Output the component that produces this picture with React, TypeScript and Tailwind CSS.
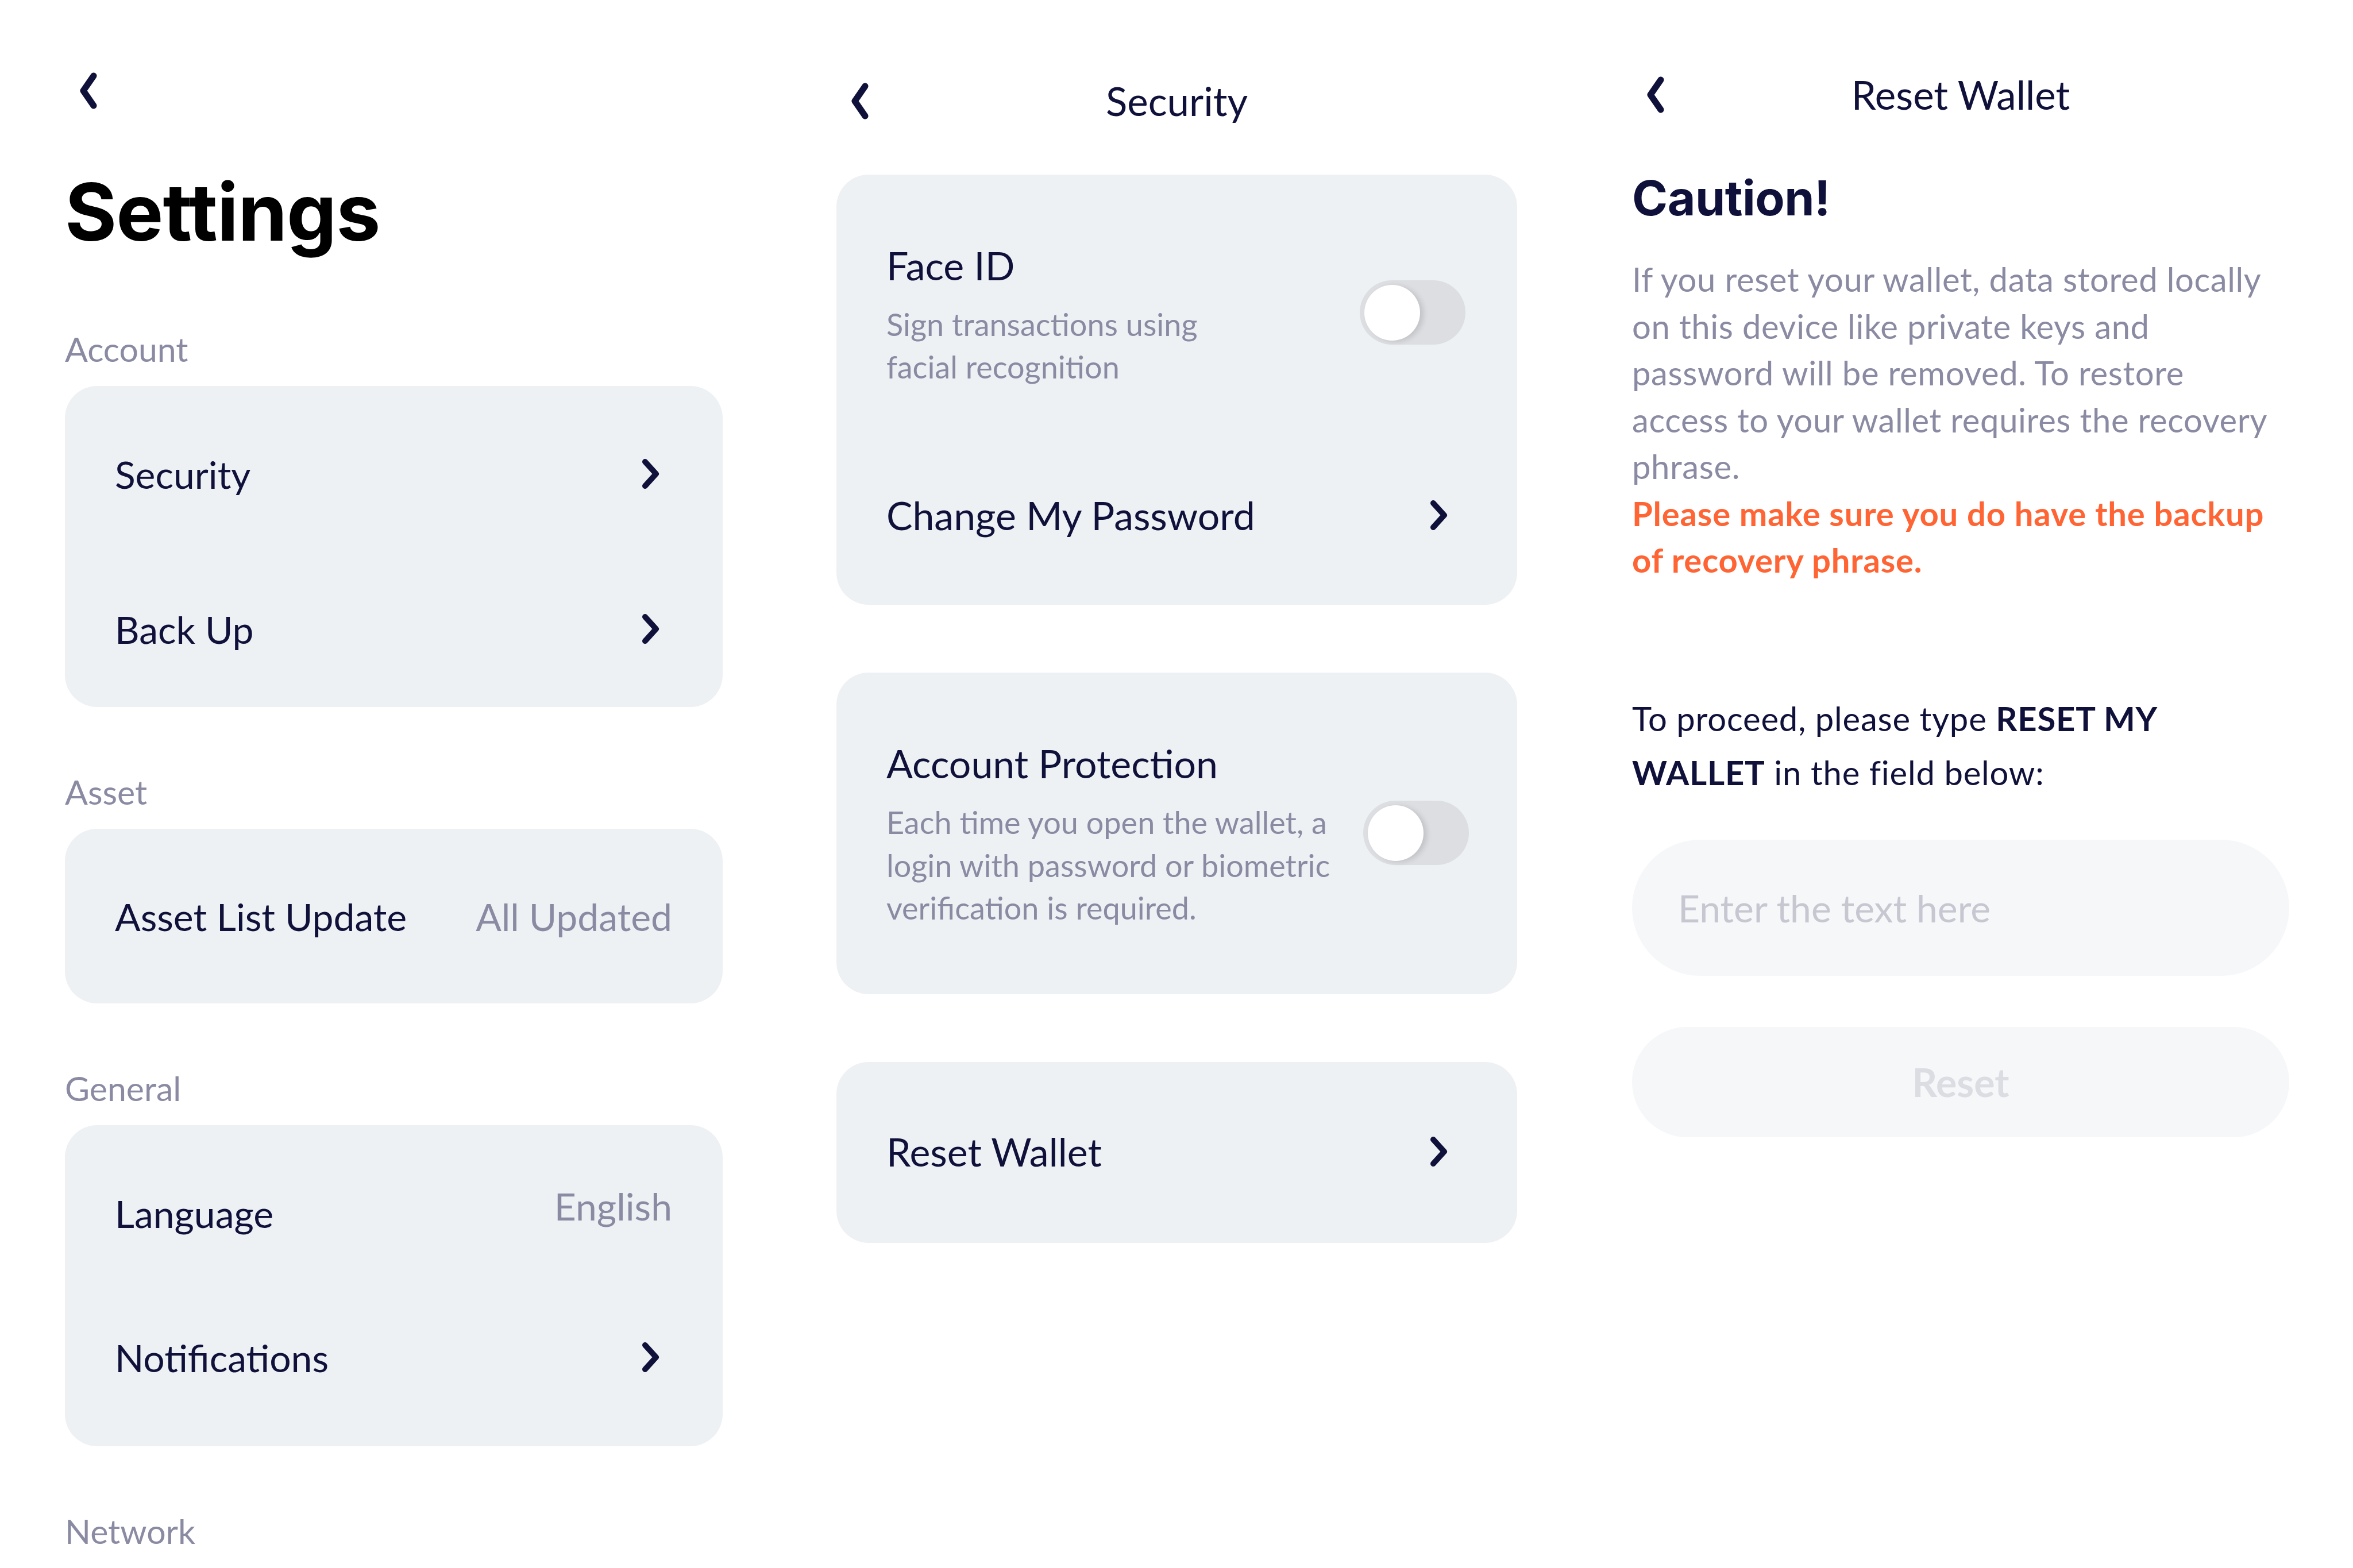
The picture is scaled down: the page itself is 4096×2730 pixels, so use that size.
import React from 'react';

const navy = 'text-[#10113a]';

function BackChevron() {
  return (
    <svg width="44" height="64" viewBox="0 0 44 64" fill="none" className="shrink-0">
      <path d="M30 6 L12 32 L30 58" stroke="#10113a" strokeWidth="11" strokeLinecap="round" strokeLinejoin="round" />
    </svg>
  );
}

function RowChevron() {
  return (
    <svg width="34" height="52" viewBox="0 0 34 52" fill="none" className="shrink-0">
      <path d="M7 5 L26 26 L7 47" stroke="#10113a" strokeWidth="10" strokeLinecap="round" strokeLinejoin="round" />
    </svg>
  );
}

function Toggle() {
  return (
    <div className="w-[184px] h-[112px] rounded-full bg-[#dcdee2] flex items-center pl-[8px] shrink-0">
      <div className="w-[97px] h-[97px] rounded-full bg-white shadow-[6px_2px_10px_rgba(0,0,0,0.12)]" />
    </div>
  );
}

function SectionLabel({ text, first }: { text: string; first?: boolean }) {
  return (
    <div className={`${first ? 'mt-[135px]' : 'mt-[113px]'} mb-[29px] h-[70px] leading-[70px] text-[59px] text-[#8a8ba3]`}>
      {text}
    </div>
  );
}

function Row({ label, children, h }: { label: string; children?: React.ReactNode; h: string }) {
  return (
    <div className={`${h} flex items-center justify-between pl-[87px] pr-[88px]`}>
      <span className={`text-[66px] ${navy}`}>{label}</span>
      {children}
    </div>
  );
}

function SettingsColumn() {
  return (
    <div className="w-[1145px] shrink-0 flex flex-col">
      <div className="pt-[126px] pl-[20px] h-[190px]">
        <BackChevron />
      </div>
      <h1 className="mt-[110px] text-[138px] leading-none font-bold text-black font-['Inter',sans-serif] tracking-[-1px]">
        Settings
      </h1>

      <SectionLabel text="Account" first />
      <div className="h-[560px] rounded-[56px] bg-[#eef1f4] pt-[18px]">
        <Row label="Security" h="h-[270px]">
          <span className="mr-[20px]"><RowChevron /></span>
        </Row>
        <Row label="Back Up" h="h-[270px]">
          <span className="mr-[20px]"><RowChevron /></span>
        </Row>
      </div>

      <SectionLabel text="Asset" />
      <div className="h-[305px] rounded-[56px] bg-[#eef1f4] flex flex-col justify-center">
        <Row label="Asset List Update" h="h-[300px]">
          <span className="text-[66px] text-[#8a8ba3]">All Updated</span>
        </Row>
      </div>

      <SectionLabel text="General" />
      <div className="h-[560px] rounded-[56px] bg-[#eef1f4] pt-[28px]">
        <Row label="Language" h="h-[250px]">
          <span className="text-[66px] text-[#8a8ba3] mb-[26px]">English</span>
        </Row>
        <Row label="Notifications" h="h-[252px]">
          <span className="mr-[20px]"><RowChevron /></span>
        </Row>
      </div>

      <SectionLabel text="Network" />
    </div>
  );
}

function Header({ title, top }: { title: string; top: string }) {
  return (
    <div className={`${top} flex items-center h-[64px]`}>
      <div className="w-[90px] pl-[20px]">
        <BackChevron />
      </div>
      <div className={`flex-1 text-center text-[69px] leading-[64px] ${navy}`}>{title}</div>
      <div className="w-[90px]" />
    </div>
  );
}

function SecurityColumn() {
  return (
    <div className="w-[1185px] shrink-0 ml-[198px] flex flex-col">
      <Header title="Security" top="mt-[144px]" />

      <div className="mt-[96px] h-[749px] rounded-[56px] bg-[#eef1f4] flex flex-col">
        <div className="pt-[118px] pl-[87px] pr-[90px] flex items-start justify-between">
          <div>
            <div className={`text-[68px] leading-[80px] ${navy}`}>Face ID</div>
            <div className="mt-[26px] text-[54px] leading-[74px] text-[#8a8ba3]">
              Sign transactions using
              <br />
              facial recognition
            </div>
          </div>
          <div className="mt-[66px]">
            <Toggle />
          </div>
        </div>
        <div className="mt-auto mb-[6px] h-[300px] flex items-center justify-between pl-[87px] pr-[119px]">
          <span className={`text-[68px] ${navy}`}>Change My Password</span>
          <RowChevron />
        </div>
      </div>

      <div className="mt-[118px] rounded-[56px] bg-[#eef1f4] pt-[118px] pb-[112px] pl-[87px] pr-[84px]">
        <div className={`text-[68px] leading-[80px] ${navy}`}>Account Protection</div>
        <div className="mt-[26px] flex items-start justify-between">
          <div className="text-[54px] leading-[74.5px] text-[#8a8ba3]">
            Each time you open the wallet, a
            <br />
            login with password or biometric
            <br />
            verification is required.
          </div>
          <div className="-mt-[1px]">
            <Toggle />
          </div>
        </div>
      </div>

      <div className="mt-[118px] h-[315px] rounded-[56px] bg-[#eef1f4] flex items-center justify-between pl-[87px] pr-[119px] pb-[2px]">
        <span className={`text-[68px] ${navy}`}>Reset Wallet</span>
        <RowChevron />
      </div>
    </div>
  );
}

function ResetColumn() {
  return (
    <div className="w-[1144px] shrink-0 ml-[200px] flex flex-col">
      <Header title="Reset Wallet" top="mt-[133px]" />

      <h2 className={`mt-[98px] text-[84px] leading-[100px] font-bold font-['Inter',sans-serif] tracking-[-0.5px] ${navy}`}>
        Caution!
      </h2>

      <p className="mt-[50px] text-[58px] leading-[81.5px] tracking-[0.6px] text-[#8a8ba3]">
        If you reset your wallet, data stored locally
        <br />
        on this device like private keys and
        <br />
        password will be removed. To restore
        <br />
        access to your wallet requires the recovery
        <br />
        phrase.
      </p>
      <p className="text-[58px] leading-[81.5px] tracking-[0.8px] font-bold text-[#ff6534]">
        Please make sure you do have the backup
        <br />
        of recovery phrase.
      </p>

      <p className={`mt-[188px] text-[58px] leading-[94px] tracking-[0.8px] ${navy}`}>
        To proceed, please type <span className="font-bold">RESET MY</span>
        <br />
        <span className="font-bold">WALLET</span> in the field below:
      </p>

      <div className="mt-[70px] h-[237px] rounded-full bg-[#f6f7f9] flex items-center pl-[80px]">
        <span className="text-[66px] text-[#c6c7d1]">Enter the text here</span>
      </div>

      <button className="mt-[89px] h-[192px] rounded-full bg-[#f6f7f9] text-[68px] font-bold text-[#dcdde3]">
        Reset
      </button>
    </div>
  );
}

export default function App() {
  return (
    <div className="w-[4096px] h-[2730px] bg-white flex pl-[113px] overflow-hidden font-['Lato',sans-serif]">
      <SettingsColumn />
      <SecurityColumn />
      <ResetColumn />
    </div>
  );
}
